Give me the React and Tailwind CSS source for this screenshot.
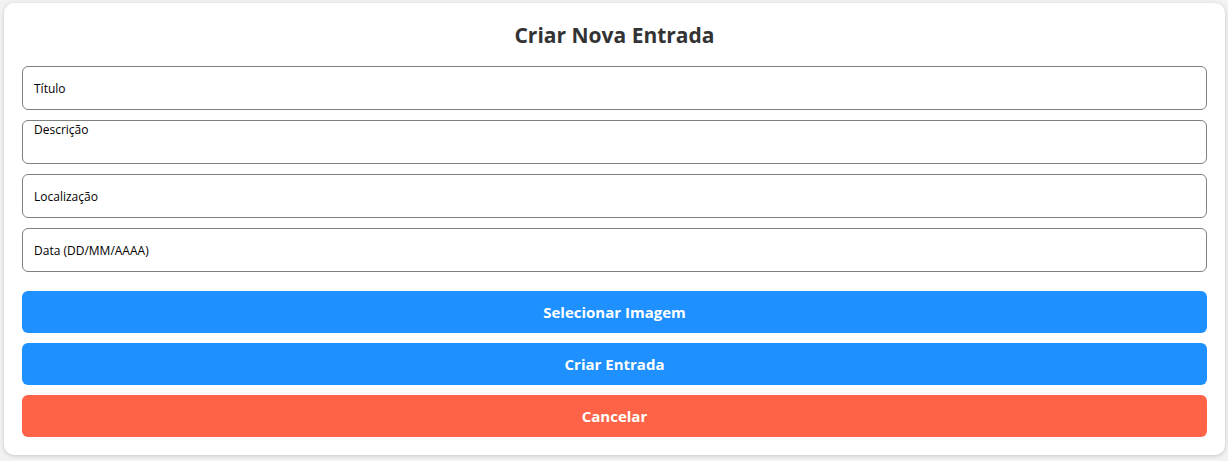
import React from 'react';

const fields = [
  { label: 'Título', type: 'input' },
  { label: 'Descrição', type: 'textarea' },
  { label: 'Localização', type: 'input' },
  { label: 'Data (DD/MM/AAAA)', type: 'input' },
];

const buttons = [
  { label: 'Selecionar Imagem', className: 'bg-[#1e90ff]' },
  { label: 'Criar Entrada', className: 'bg-[#1e90ff]' },
  { label: 'Cancelar', className: 'bg-[#ff6347]' },
];

const App = () => {
  return (
    <div className="min-h-[461px] bg-[#f2f2f2] pt-[3px] pl-[4px] pr-[3px] font-['Open_Sans',sans-serif]">
      <div className="bg-white rounded-[10px] shadow-[0_1px_4px_rgba(0,0,0,0.18)] px-[18px] pt-[18px] pb-[18px]">
        <h2 className="text-center text-[21px] font-bold text-[#333] leading-[28px] mb-[17px]">
          Criar Nova Entrada
        </h2>
        <div className="flex flex-col gap-[10px]">
          {fields.map(field => (
            field.type === 'textarea' ? (
              <textarea
                key={field.label}
                placeholder={field.label}
                className="h-[44px] resize-none border border-[#808080] rounded-[6px] px-[11px] pt-[1px] text-[12px] leading-[16px] text-black placeholder:text-black outline-none"
              />
            ) : (
              <input
                key={field.label}
                placeholder={field.label}
                className="h-[44px] border border-[#808080] rounded-[6px] px-[11px] text-[12px] text-black placeholder:text-black outline-none"
              />
            )
          ))}
        </div>
        <div className="flex flex-col gap-[10px] mt-[19px]">
          {buttons.map(btn => (
            <button
              key={btn.label}
              className={`h-[42px] rounded-[6px] text-white text-[15px] font-bold ${btn.className}`}
            >
              {btn.label}
            </button>
          ))}
        </div>
      </div>
    </div>
  );
};

export default App;
